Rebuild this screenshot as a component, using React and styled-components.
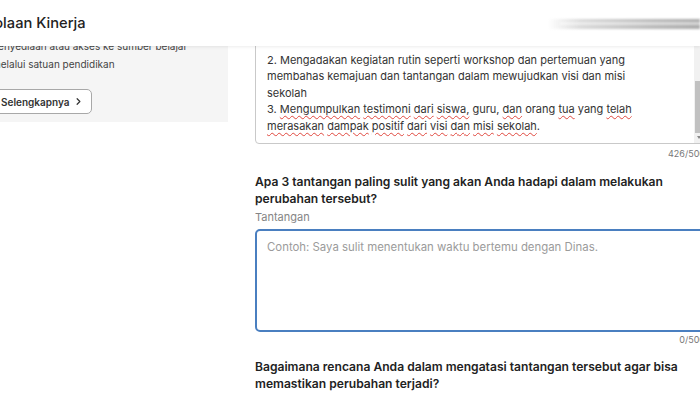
import React from "react";
import styled, { createGlobalStyle } from "styled-components";
import { ChevronRight } from "lucide-react";

const GlobalStyle = createGlobalStyle`
  html, body {
    margin: 0;
    padding: 0;
    background: #fff;
    overflow: hidden;
  }
  body {
    font-family: "Inter", "Noto Sans", sans-serif;
    color: #222;
  }
`;

const Viewport = styled.div`
  position: relative;
  width: 700px;
  height: 393px;
  overflow: hidden;
  background: #fff;
`;

const Shell = styled.div`
  width: 765px;
  margin-left: -60px;
`;

const Header = styled.header`
  position: absolute;
  z-index: 5;
  top: 0;
  left: 0;
  right: 0;
  height: 46px;
  display: flex;
  align-items: center;
  background: #fff;
  box-shadow: 0 1px 3px rgba(0, 0, 0, 0.08);
`;

/* the page is scrolled sideways, so the start of the title is cut off */
const Title = styled.h1`
  margin: 0 0 0 -54px;
  font-size: 14.7px;
  font-weight: 500;
  color: #222;
  white-space: nowrap;
`;

/* blurred progress bar peeking in at the top right */
const Progress = styled.div`
  position: absolute;
  right: 0;
  top: 19px;
  width: 152px;
  height: 10px;
  background: linear-gradient(
    90deg,
    rgba(230, 230, 230, 0) 0%,
    #dadada 22%,
    #bdbdbd 65%,
    #acacac 100%
  );
  filter: blur(1.2px);

  &::after {
    content: "";
    position: absolute;
    left: 8%;
    right: 0;
    top: 3px;
    height: 3px;
    background: rgba(255, 255, 255, 0.5);
  }
`;

const Row = styled.div`
  display: flex;
  align-items: flex-start;
  gap: 27px;
`;

const SideCard = styled.aside`
  flex: 0 0 288px;
  box-sizing: border-box;
  padding: 19px 16px 8px 52px;
  background: #f5f5f5;
`;

const SideText = styled.p`
  margin: 0;
  font-size: 10px;
  line-height: 18px;
  color: #444;
  white-space: nowrap;
`;

const MoreButton = styled.button`
  margin-top: 16px;
  height: 25px;
  display: inline-flex;
  align-items: center;
  gap: 3px;
  padding: 0 7px 0 8px;
  background: #fff;
  border: 1px solid #a8a8a8;
  border-radius: 5px;
  font-family: "Inter", sans-serif;
  font-size: 10px;
  font-weight: 600;
  color: #333;
`;

const Main = styled.main`
  flex: 1;
  margin-top: -8px;
  display: flex;
  flex-direction: column;
`;

const AnswerBox = styled.div`
  position: relative;
  padding: 9px 22px 9px 11px;
  border: 1px solid #c9c9c9;
  border-radius: 4px;
  font-size: 11px;
  line-height: 16.5px;
  color: #333;
  white-space: pre-line;
`;

const Typo = styled.span`
  text-decoration: underline wavy #e0483e;
  text-decoration-thickness: 1px;
  text-underline-offset: 2px;
`;

const ScrollTrack = styled.div`
  position: absolute;
  top: 0;
  right: 0;
  bottom: 0;
  width: 10px;
  background: #f1f1f1;
  border-radius: 0 4px 4px 0;
`;

const ScrollThumb = styled.div`
  position: absolute;
  left: 1px;
  right: 1px;
  top: 88px;
  bottom: 10px;
  background: #c1c1c1;
`;

const ScrollArrow = styled.div`
  position: absolute;
  left: 3px;
  bottom: 4px;
  width: 0;
  height: 0;
  border-left: 2px solid transparent;
  border-right: 2px solid transparent;
  border-top: 3px solid #8a8a8a;
`;

const Counter = styled.div`
  margin-top: ${(p) => p.$gap}px;
  text-align: right;
  font-size: 9px;
  line-height: 12px;
  color: #777;
`;

const Question = styled.h2`
  margin: ${(p) => p.$top}px 0 0;
  font-size: 12.1px;
  font-weight: 600;
  line-height: 17px;
  color: #222;
`;

const Label = styled.label`
  margin-top: 3px;
  font-size: 11px;
  line-height: 14px;
  color: #858585;
`;

const Field = styled.textarea`
  margin-top: 5px;
  box-sizing: border-box;
  height: 103px;
  padding: 8px 10px;
  border: 2px solid #4a7fc0;
  border-radius: 5px;
  resize: none;
  outline: none;
  font-family: "Inter", sans-serif;
  font-size: 11.4px;
  line-height: 16.5px;
  color: #333;

  &::placeholder {
    color: #9b9b9b;
  }
`;

const typoLine = (words) =>
  words.map(([w, bad], i) => (
    <React.Fragment key={i}>
      {bad ? <Typo>{w}</Typo> : w}
      {i < words.length - 1 ? " " : ""}
    </React.Fragment>
  ));

export default function App() {
  return (
    <Viewport>
      <GlobalStyle />
      <Shell>
        <Header>
          <Title>Pengelolaan Kinerja</Title>
          <Progress />
        </Header>
        <Row>
          <SideCard>
            <SideText>
              Mendorong mutu pembelajaran dengan
              <br />
              penyediaan atau akses ke sumber belajar
              <br />
              melalui satuan pendidikan
            </SideText>
            <MoreButton>
              Selengkapnya <ChevronRight size={11} strokeWidth={2.6} />
            </MoreButton>
          </SideCard>
          <Main>
            <AnswerBox>
              {"1. Menyusun program sosialisasi visi dan misi sekolah kepada\nseluruh warga sekolah secara berkala\n\n"}
              {"2. Mengadakan kegiatan rutin seperti workshop dan pertemuan yang\nmembahas kemajuan dan tantangan dalam mewujudkan visi dan misi\nsekolah\n"}
              {typoLine([
                ["3."],
                ["Mengumpulkan", 1],
                ["testimoni", 1],
                ["dari", 1],
                ["siswa,", 1],
                ["guru,"],
                ["dan", 1],
                ["orang"],
                ["tua", 1],
                ["yang"],
                ["telah", 1],
              ])}
              {"\n"}
              {typoLine([
                ["merasakan", 1],
                ["dampak", 1],
                ["positif", 1],
                ["dari", 1],
                ["visi", 1],
                ["dan", 1],
                ["misi", 1],
                ["sekolah", 1],
              ])}
              .
              <ScrollTrack>
                <ScrollThumb />
                <ScrollArrow />
              </ScrollTrack>
            </AnswerBox>
            <Counter $gap={4}>426/500</Counter>
            <Question $top={13}>
              Apa 3 tantangan paling sulit yang akan Anda hadapi dalam melakukan
              perubahan tersebut?
            </Question>
            <Label>Tantangan</Label>
            <Field
              readOnly
              placeholder="Contoh: Saya sulit menentukan waktu bertemu dengan Dinas."
            />
            <Counter $gap={2}>0/500</Counter>
            <Question $top={12}>
              Bagaimana rencana Anda dalam mengatasi tantangan tersebut agar bisa
              memastikan perubahan terjadi?
            </Question>
          </Main>
        </Row>
      </Shell>
    </Viewport>
  );
}
